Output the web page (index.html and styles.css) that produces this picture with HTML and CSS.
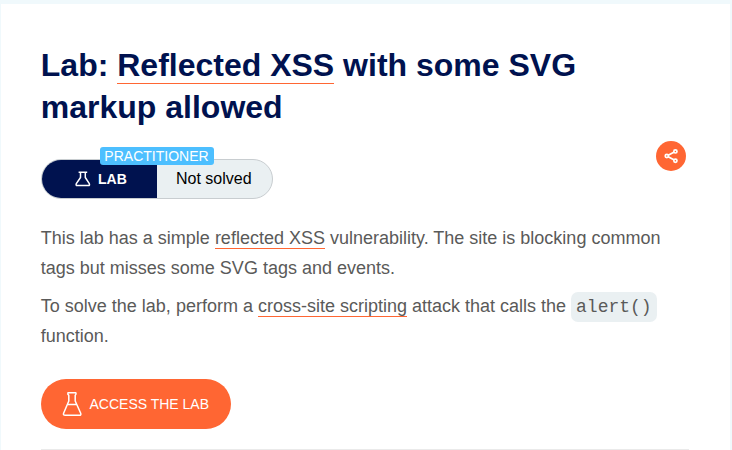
FILE: index.html
```html
<!DOCTYPE html>
<html lang="en">
<head>
<meta charset="utf-8">
<title>Lab: Reflected XSS with some SVG markup allowed</title>
<link rel="stylesheet" href="styles.css">
</head>
<body>
<main class="card">
  <h1 class="title">Lab: <a class="title-link">Reflected XSS</a> with some SVG markup allowed</h1>
  <div class="meta">
    <div class="status">
      <span class="level">PRACTITIONER</span>
      <div class="status-lab">
        <svg width="16" height="16" viewBox="0 0 16 16" fill="none" stroke="#fff" stroke-width="1.5" stroke-linejoin="round"><path d="M3.6 1.2h8.6M5.5 1.5v5L1.3 12.7Q.6 14.5 2.2 14.5h11.2q1.6 0 .9-1.8L10.3 6.5v-5"/></svg>
        <span>LAB</span>
      </div>
      <div class="status-text">Not solved</div>
    </div>
    <a class="share">
      <svg width="30" height="30" viewBox="0 0 30 30" fill="none" stroke="#fff" stroke-width="1.7"><path d="M12.2 14.3l5.6-3M12.2 15.8l5.6 3"/><circle cx="10.8" cy="15" r="1.6"/><circle cx="19.4" cy="10.4" r="1.6"/><circle cx="19.4" cy="19.7" r="1.6"/></svg>
    </a>
  </div>
  <p>This lab has a simple <a class="link">reflected XSS</a> vulnerability. The site is blocking common tags but misses some SVG tags and events.</p>
  <p>To solve the lab, perform a <a class="link">cross-site scripting</a> attack that calls the <code>alert()</code> function.</p>
  <a class="button">
    <svg width="20" height="26" viewBox="0 0 20 26" fill="none" stroke="#fff" stroke-width="1.5" stroke-linejoin="round"><path d="M6 1.7h7.8q.8 1.4-.6 2.7v5.6l5.5 12.2Q19.4 24.3 17.4 24.3h-14Q.8 24.3 1.6 22.2L6.8 10V4.4Q5.2 3.1 6 1.7zM5 13.5h9.8"/></svg>
    <span>ACCESS THE LAB</span>
  </a>
  <hr>
</main>
</body>
</html>
```
FILE: styles.css
```css
* { box-sizing: border-box; }
body {
  margin: 0;
  padding: 4px 2px 0 1px;
  height: 450px;
  overflow: hidden;
  background: #f0f9fc;
  font-family: "Liberation Sans", Arial, sans-serif;
  color: #5a5a59;
}
.card { min-height: 446px; padding: 40px 41px 0 39.8px; background: #fff; }
.title { margin: 0; font-size: 32px; line-height: 42px; color: #00124f; }
.title-link { border-bottom: 1px solid #f63; }
.meta {
  display: flex;
  justify-content: space-between;
  align-items: flex-start;
  margin: 13px 3px 24px .2px;
}
.status {
  position: relative;
  display: flex;
  width: 232px;
  height: 40px;
  margin-top: 18px;
  border: 1px solid #c8cdd0;
  border-radius: 20px;
  background: #eaf0f2;
}
.level {
  position: absolute;
  top: -13px;
  left: 58px;
  width: 114px;
  height: 18px;
  padding-right: 1px;
  border-radius: 3px;
  background: #4dbfff;
  color: #fff;
  font-size: 14px;
  line-height: 18px;
  text-align: center;
}
.status-lab {
  display: flex;
  align-items: center;
  gap: 7px;
  width: 115px;
  padding-left: 33px;
  border-radius: 19px 0 0 19px;
  background: #00124f;
  color: #fff;
  font-size: 14px;
  font-weight: bold;
}
.status-text { padding-left: 19px; font-size: 16px; line-height: 38px; color: #000; }
.share { width: 30px; height: 30px; border-radius: 50%; background: #f63; }
.share svg, .button svg { display: block; }
p { margin: 0 0 8px; font-size: 18px; line-height: 30px; }
.link { border-bottom: 1px solid #f63; }
code {
  padding: 5px;
  border-radius: 7px;
  background: #eaf0f2;
  font-family: "Liberation Mono", monospace;
  font-size: 18px;
  line-height: 20px;
}
.button {
  display: flex;
  align-items: center;
  gap: 7.5px;
  width: 190px;
  height: 50px;
  margin: 28px 0 0 .2px;
  padding-left: 21px;
  border-radius: 25px;
  background: #f63;
  color: #fff;
  font-size: 14px;
}
hr { margin: 20px 0 0 .2px; border: 0; border-top: 1px solid #eaeaea; }
```
